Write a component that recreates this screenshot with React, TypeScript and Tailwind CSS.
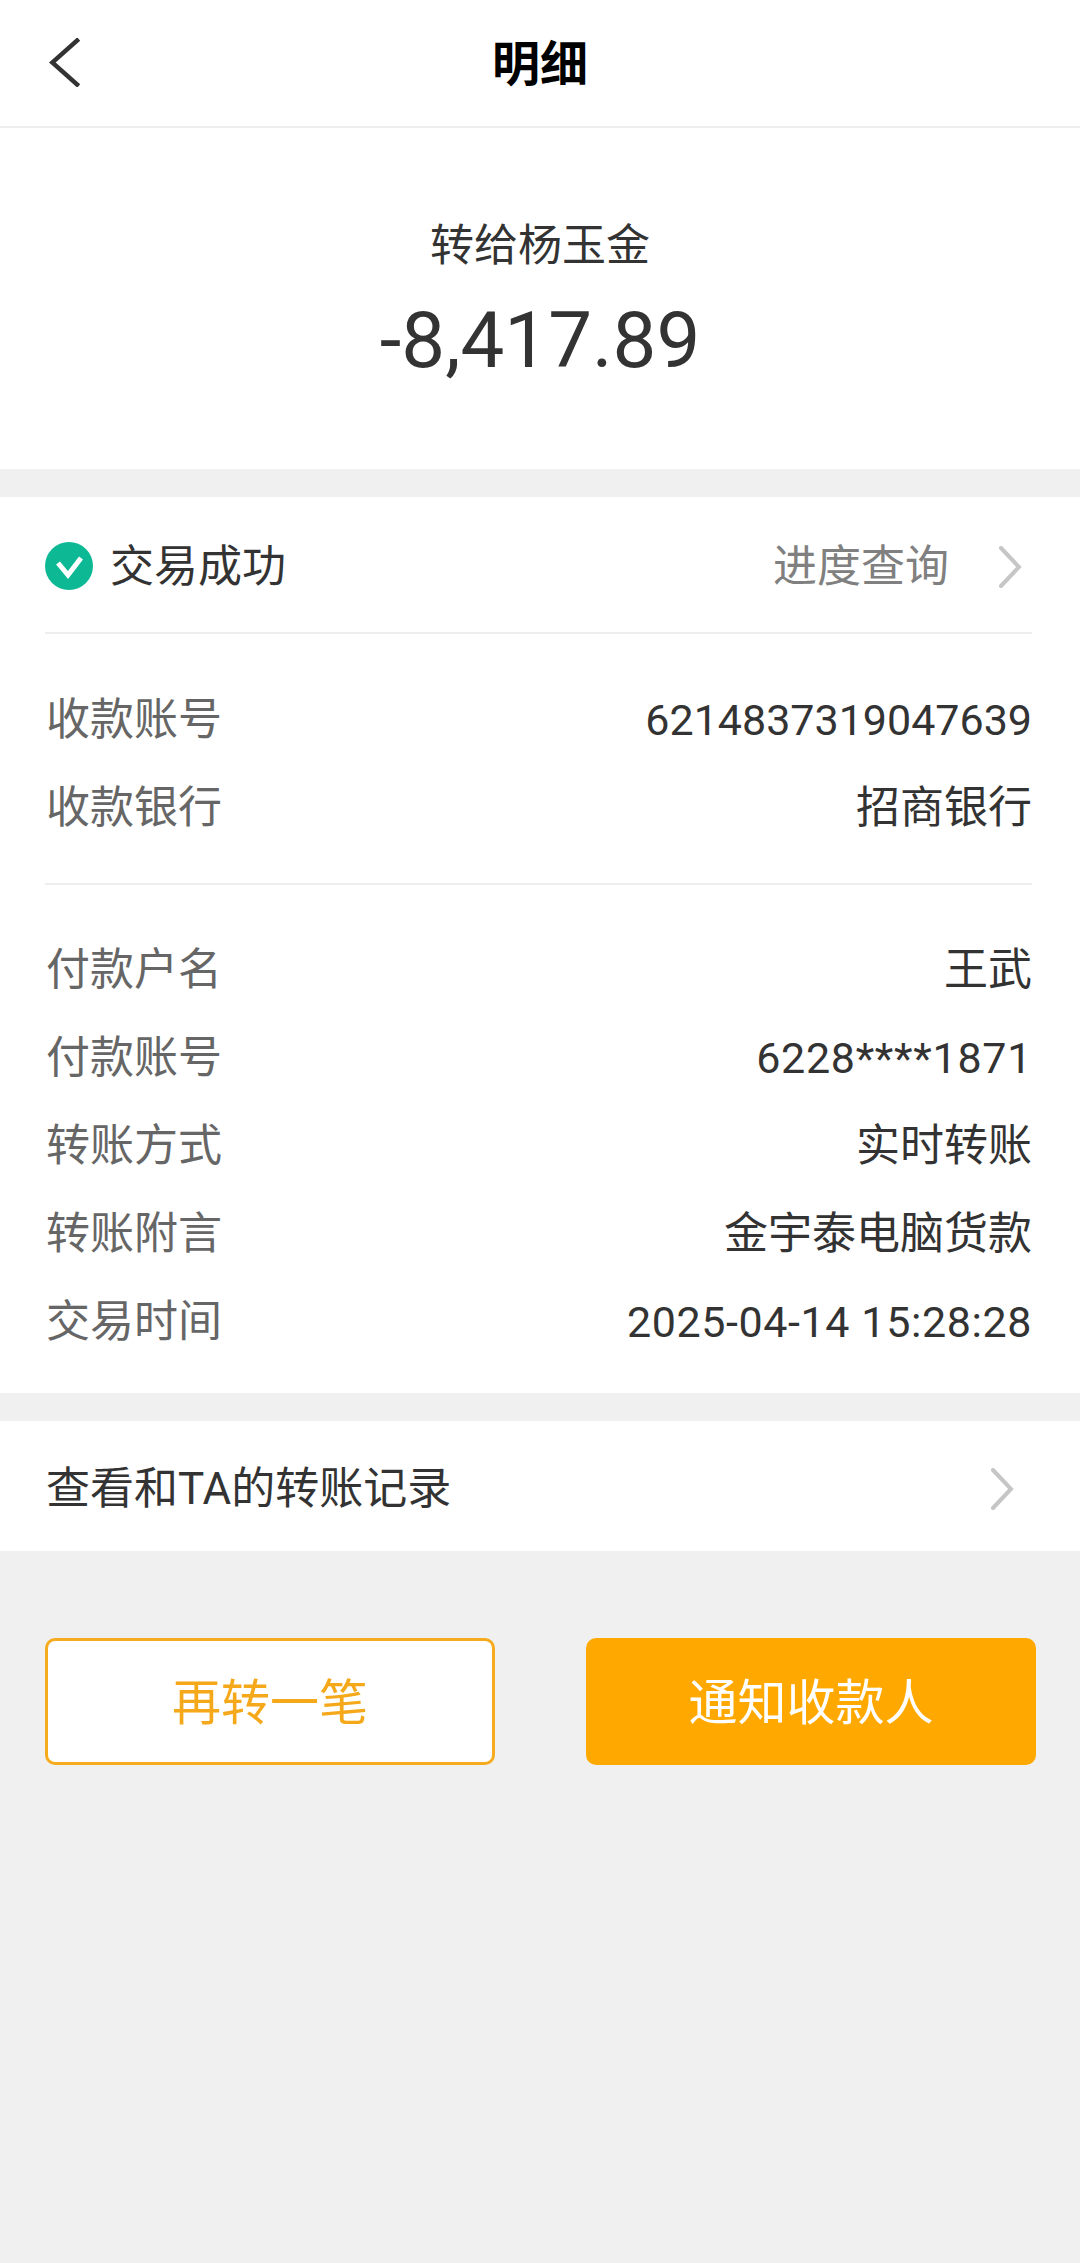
const font = 'font-["Roboto","Noto_Sans_CJK_SC",sans-serif]';

const receiver = [
  { label: '收款账号', value: '6214837319047639', className: 'text-[43px]' },
  { label: '收款银行', value: '招商银行', className: 'text-[44px]' },
];

const payer = [
  { label: '付款户名', value: '王武', className: 'text-[44px]' },
  { label: '付款账号', value: '6228****1871', className: 'text-[43px] tracking-[0.7px]' },
  { label: '转账方式', value: '实时转账', className: 'text-[44px]' },
  { label: '转账附言', value: '金宇泰电脑货款', className: 'text-[44px]' },
  { label: '交易时间', value: '2025-04-14 15:28:28', className: 'text-[43px] tracking-[0.6px]' },
];

function Chevron({ className }: { className: string }) {
  return (
    <svg viewBox="0 0 24 42" className={className} fill="none" stroke="#c6c6c6" strokeWidth="4" strokeLinecap="round" strokeLinejoin="miter">
      <path d="M3 2 L21 21 L3 40" />
    </svg>
  );
}

function Row({ label, value, className }: { label: string; value: string; className: string }) {
  return (
    <div className="flex h-[88px] items-center justify-between pt-[6px]">
      <span className="pl-[1px] text-[44px] text-[#666666]">{label}</span>
      <span className={`text-[#333333] ${className}`}>{value}</span>
    </div>
  );
}

export default function App() {
  return (
    <div className={`${font} flex min-h-[2263px] w-[1080px] flex-col bg-[#f0f0f0]`}>
      <div className="relative flex h-[128px] items-center justify-center border-b-2 border-[#eeeeee] bg-white">
        <svg viewBox="0 0 32 50" className="absolute left-[49px] top-[38px] h-[49px] w-[32px]" fill="none" stroke="#333333" strokeWidth="4.5">
          <path d="M30 1 L3 25 L30 49" />
        </svg>
        <span className="pt-[3px] text-[48px] font-bold text-black">明细</span>
      </div>

      <div className="flex h-[341px] flex-col items-center bg-white pt-[86px]">
        <div className="text-[44px] leading-[64px] text-[#333333]">转给杨玉金</div>
        <div className="mt-[17px] text-[78px] leading-[92px] text-[#333333]">-8,417.89</div>
      </div>

      <div className="mt-[28px] bg-white pl-[45px] pr-[48px]">
        <div className="flex h-[137px] items-center justify-between border-b-2 border-[#eeeeee] pt-[5px]">
          <div className="flex items-center gap-[17px]">
            <svg viewBox="0 0 48 48" className="-mt-[2px] h-[48px] w-[48px]">
              <circle cx="24" cy="24" r="24" fill="#0db894" />
              <path d="M13 21 L23 33 L36 16" fill="none" stroke="#ffffff" strokeWidth="5" />
            </svg>
            <span className="text-[44px] text-[#333333]">交易成功</span>
          </div>
          <div className="flex items-center gap-[49px] pr-[10px]">
            <span className="text-[44px] text-[#808080]">进度查询</span>
            <Chevron className="h-[42px] w-[24px]" />
          </div>
        </div>
        <div className="border-b-2 border-[#eeeeee] pb-[34px] pt-[39px]">
          {receiver.map((r) => (
            <Row key={r.label} {...r} />
          ))}
        </div>
        <div className="pb-[30px] pt-[38px]">
          {payer.map((r) => (
            <Row key={r.label} {...r} />
          ))}
        </div>
      </div>

      <div className="mt-[28px] flex h-[130px] items-center justify-between bg-white pl-[46px] pr-[66px] pt-[5px] text-[44px] text-[#333333]">
        <span>查看和TA的转账记录</span>
        <Chevron className="h-[42px] w-[24px]" />
      </div>

      <div className="mt-[87px] flex justify-between pl-[45px] pr-[44px]">
        <button className="h-[127px] w-[450px] rounded-[10px] border-[3px] border-[#f5ab1d] bg-white pt-[5px] text-[49px] text-[#f5a81a]">
          再转一笔
        </button>
        <button className="h-[127px] w-[450px] rounded-[10px] bg-[#ffa900] pt-[5px] text-[49px] text-white">
          通知收款人
        </button>
      </div>
    </div>
  );
}
